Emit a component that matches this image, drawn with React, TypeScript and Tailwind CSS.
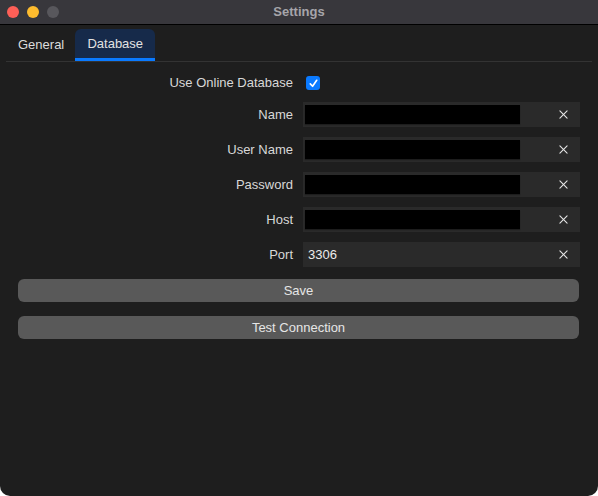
import { useState } from "react";

type TField = {
  label: string;
  value: string;
  masked: boolean;
};

const fields: TField[] = [
  { label: "Name", value: "", masked: true },
  { label: "User Name", value: "", masked: true },
  { label: "Password", value: "", masked: true },
  { label: "Host", value: "", masked: true },
  { label: "Port", value: "3306", masked: false },
];

const ClearIcon = () => (
  <svg viewBox="0 0 10 10" className="w-[9px] h-[9px]" fill="none" stroke="#e6e6e6" strokeWidth="1.2" strokeLinecap="round">
    <line x1="1" y1="1" x2="9" y2="9" />
    <line x1="9" y1="1" x2="1" y2="9" />
  </svg>
);

const FieldRow = ({ field }: { field: TField }) => (
  <div className="flex items-center h-[25px] mb-[10px]">
    <div className="w-[293px] text-right text-[13px] text-[#d8d8d8]">{field.label}</div>
    <div className="ml-[10px] w-[277px] h-[25px] bg-[#2a2a2a] flex items-center pl-[2px] pr-[12px]">
      {field.masked ? (
        <div className="w-[215px] h-[19px] bg-black shadow-[0_1px_1px_rgba(0,0,0,0.3)]" />
      ) : (
        <div className="w-[215px] pl-[3px] text-[13px] text-[#ececec]">{field.value}</div>
      )}
      <div className="ml-auto flex items-center">
        <ClearIcon />
      </div>
    </div>
  </div>
);

export default function App() {
  const [online, setOnline] = useState(true);
  return (
    <div
      className="w-[598px] h-[496px] bg-[#1e1e1e] rounded-b-[10px] overflow-hidden flex flex-col"
      style={{ fontFamily: '"Liberation Sans", Arial, sans-serif' }}
    >
      {/* title bar */}
      <div className="h-[25px] bg-[#38373c] border-b border-black flex items-center relative shrink-0">
        <div className="flex gap-[8px] pl-[7px]">
          <div className="w-[12px] h-[12px] rounded-full bg-[#fe5f57]" />
          <div className="w-[12px] h-[12px] rounded-full bg-[#febc2e]" />
          <div className="w-[12px] h-[12px] rounded-full bg-[#58575c]" />
        </div>
        <div className="absolute inset-0 flex items-center justify-center text-[13px] font-bold text-[#a6a5aa]">
          Settings
        </div>
      </div>

      {/* tabs */}
      <div className="mx-[6px] mt-[4px] h-[33px] border-b border-[#333333] flex items-end">
        <div className="h-[32px] pl-[12px] pr-[11px] flex items-center text-[13px] text-[#dcdcdc]">General</div>
        <div className="w-[80px] h-[32px] bg-[#162a4a] rounded-t-[6px] border-b-[3px] border-[#0a7aff] flex items-center justify-center text-[13px] text-[#e2e2e2]">
          Database
        </div>
      </div>

      {/* form */}
      <div className="pt-[12px]">
        <div className="flex items-center h-[18px] mb-[10px]">
          <div className="w-[293px] text-right text-[13px] text-[#d8d8d8]">Use Online Database</div>
          <button
            onClick={() => setOnline(!online)}
            className={`ml-[13px] w-[14px] h-[14px] rounded-[3px] flex items-center justify-center ${online ? "bg-[#0a7aff]" : "bg-[#555]"}`}
          >
            {online && (
              <svg viewBox="0 0 12 12" className="w-[11px] h-[11px]" fill="none" stroke="white" strokeWidth="1.8" strokeLinecap="round" strokeLinejoin="round">
                <path d="M2.5 6.5 L5 9 L9.5 2.5" />
              </svg>
            )}
          </button>
        </div>

        {fields.map((f) => (
          <FieldRow key={f.label} field={f} />
        ))}
      </div>

      {/* buttons */}
      <div className="pl-[18px] pr-[19px] mt-[2px] flex flex-col gap-[14px]">
        <button className="h-[23px] w-full rounded-[6px] bg-[#595959] text-[13px] text-[#e6e6e6]">Save</button>
        <button className="h-[23px] w-full rounded-[6px] bg-[#595959] text-[13px] text-[#e6e6e6]">Test Connection</button>
      </div>
    </div>
  );
}
